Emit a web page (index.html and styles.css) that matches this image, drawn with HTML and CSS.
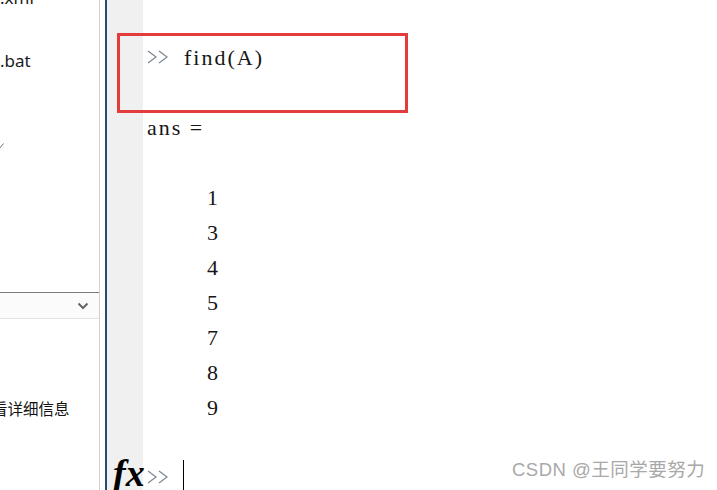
FILE: index.html
```html
<!DOCTYPE html>
<html lang="zh">
<head>
<meta charset="utf-8">
<title>MATLAB find(A)</title>
<link rel="stylesheet" href="styles.css">
</head>
<body>
<div class="app">
  <aside class="sidebar">
    <div class="file file-xml">.xml</div>
    <div class="file file-bat">.bat</div>
    <svg class="frag" width="5" height="6" viewBox="0 0 5 6"><path d="M4.5 0.5 L0.5 5.5" stroke="#777" stroke-width="1" fill="none"/></svg>
    <div class="dropdown">
      <svg class="chev" width="12" height="8" viewBox="0 0 12 8"><path d="M1.5 1.5 L6 6 L10.5 1.5" stroke="#666" stroke-width="2" fill="none"/></svg>
    </div>
    <div class="info">看详细信息</div>
  </aside>
  <div class="gutter">
    <div class="fx">fx</div>
  </div>
  <main class="console">
    <div class="line"><span class="prompt"><svg class="gt" width="22" height="14" viewBox="0 0 22 14"><path d="M1 1 L9 7 L1 13 M12 1 L20 7 L12 13" stroke="#7d8791" stroke-width="1.2" fill="none"/></svg></span>find(A)</div>
    <div class="line"></div>
    <div class="line">ans =</div>
    <div class="line"></div>
    <div class="line num">1</div>
    <div class="line num">3</div>
    <div class="line num">4</div>
    <div class="line num">5</div>
    <div class="line num">7</div>
    <div class="line num">8</div>
    <div class="line num">9</div>
    <div class="line"></div>
    <div class="line"><span class="prompt short"><svg class="gt" width="22" height="14" viewBox="0 0 22 14"><path d="M1 1 L9 7 L1 13 M12 1 L20 7 L12 13" stroke="#7d8791" stroke-width="1.2" fill="none"/></svg></span><span class="cursor"></span></div>
  </main>
  <div class="highlight"></div>
  <div class="watermark">CSDN @王同学要努力</div>
</div>
</body>
</html>
```
FILE: styles.css
```css
html, body {
  margin: 0;
  padding: 0;
  background: #ffffff;
}
.app {
  position: relative;
  display: flex;
  width: 717px;
  height: 490px;
  overflow: hidden;
  background: #ffffff;
}
.sidebar {
  width: 99px;
  flex: none;
  border-right: 1px solid #d2d2d2;
  margin-right: 5px;
  overflow: hidden;
  display: flex;
  flex-direction: column;
  font-family: "Noto Sans", "Noto Sans CJK SC", sans-serif;
  color: #1a1a1a;
}
.file {
  font-size: 17px;
  line-height: 20px;
  height: 20px;
  white-space: nowrap;
  flex: none;
}
.file-xml { margin-top: -12px; }
.file-bat { margin-top: 43px; }
.frag {
  display: block;
  flex: none;
  margin-top: 72px;
  margin-left: -1px;
}
.dropdown {
  flex: none;
  box-sizing: border-box;
  height: 27px;
  margin-top: 143px;
  border-top: 1px solid #7b7b7b;
  border-bottom: 1px solid #e3e3e3;
  background: #fbfbfb;
  display: flex;
  align-items: center;
  justify-content: flex-end;
  padding-right: 10px;
}
.chev { display: block; }
.info {
  flex: none;
  margin-top: 79px;
  margin-left: -8px;
  font-family: "Noto Sans CJK SC", sans-serif;
  font-size: 15.5px;
  line-height: 20px;
  white-space: nowrap;
  color: #111;
}
.gutter {
  width: 30px;
  flex: none;
  border-left: 2px solid #1f4c78;
  background: #f0f0f0;
  display: flex;
  flex-direction: column;
  justify-content: flex-end;
  padding-left: 6px;
  overflow: visible;
}
.fx {
  font-family: "Liberation Serif", serif;
  font-weight: bold;
  font-style: italic;
  font-size: 38px;
  line-height: 38px;
  margin-bottom: -2px;
  color: #000;
  white-space: nowrap;
}
.console {
  flex: 1;
  padding-top: 40px;
  padding-left: 4px;
  font-family: "Liberation Serif", serif;
  font-size: 22px;
  letter-spacing: 2px;
  color: #161616;
}
.line {
  height: 35px;
  line-height: 35px;
  white-space: pre;
}
.num { padding-left: 60px; }
.prompt {
  display: inline-block;
  width: 37px;
  letter-spacing: 0;
}
.prompt.short { width: 36px; }
.gt { vertical-align: 1px; }
.cursor {
  display: inline-block;
  width: 1px;
  height: 35px;
  background: #000;
  vertical-align: top;
}
.highlight {
  position: absolute;
  left: 117px;
  top: 33px;
  width: 291px;
  height: 80px;
  box-sizing: border-box;
  border: 3px solid #e33c3c;
}
.watermark {
  position: absolute;
  left: 512px;
  top: 460px;
  font-family: "Liberation Sans", "Noto Sans CJK SC", sans-serif;
  font-size: 18.5px;
  line-height: 20px;
  letter-spacing: 0.5px;
  color: #a8a8a8;
  white-space: nowrap;
}
```
